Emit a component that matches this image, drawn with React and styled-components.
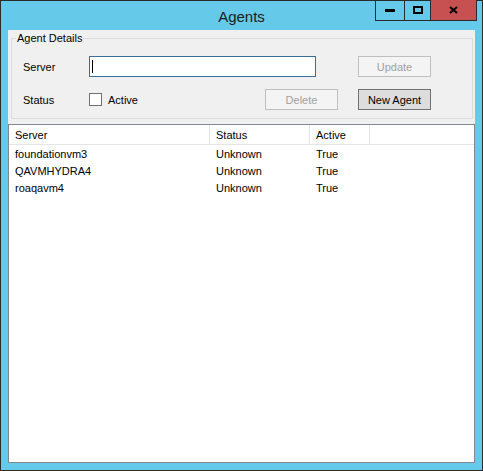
import React from 'react';
import styled, { createGlobalStyle } from 'styled-components';

const GlobalStyle = createGlobalStyle`
  html, body {
    margin: 0;
    padding: 0;
    background: #ffffff;
  }
  body {
    font-family: "Liberation Sans", Arial, sans-serif;
    font-size: 11px;
    color: #000;
  }
`;

const Window = styled.div`
  width: 483px;
  height: 471px;
  box-sizing: border-box;
  border: 1px solid #2b2b2b;
  background: #65c9ea;
  display: flex;
  flex-direction: column;
`;

const TitleBar = styled.div`
  height: 29px;
  display: grid;
  grid-template-columns: 1fr auto 1fr;
  align-items: start;
`;

const Title = styled.div`
  grid-column: 2;
  font-size: 15px;
  line-height: 15px;
  padding-top: 8px;
  color: #1b1b1b;
`;

const Controls = styled.div`
  grid-column: 3;
  justify-self: end;
  margin-right: 5px;
  margin-top: -1px;
  display: flex;
  border: 1px solid #2b2b2b;
  border-top: none;
  height: 21px;
  box-sizing: border-box;
`;

const CtrlButton = styled.div`
  width: ${p => p.$w}px;
  height: 100%;
  box-sizing: border-box;
  border-left: ${p => (p.$first ? 'none' : '1px solid #2b2b2b')};
  background: ${p => p.$bg || 'transparent'};
  display: flex;
  align-items: center;
  justify-content: center;
`;

const Client = styled.div`
  flex: 1;
  margin: 0 7px 7px 7px;
  display: flex;
  flex-direction: column;
  background: #f0f0f0;
`;

const TopPanel = styled.div`
  height: 94px;
  box-sizing: border-box;
  padding: 2px 2px 5px 3px;
`;

const GroupBox = styled.fieldset`
  margin: 0;
  height: 100%;
  box-sizing: border-box;
  border: 1px solid #dcdcdc;
  padding: 11px 0 0 11px;
  display: grid;
  grid-template-columns: 66px 176px 73px 20px 73px;
  grid-template-rows: 21px 21px;
  row-gap: 12px;
  align-items: center;
  align-content: start;
`;

const Legend = styled.legend`
  padding: 0 1px;
  margin-left: -7px;
  line-height: 13px;
`;

const Label = styled.div`
  grid-column: 1;
`;

const TextBox = styled.div`
  grid-column: 2 / span 2;
  width: 227px;
  height: 21px;
  box-sizing: border-box;
  border: 1px solid #3a6f9c;
  background: #fff;
  display: flex;
  align-items: center;
  padding-left: 2px;
`;

const Caret = styled.span`
  width: 1px;
  height: 13px;
  background: #000;
`;

const CheckField = styled.label`
  grid-column: 2;
  display: flex;
  align-items: center;
  gap: 6px;
`;

const CheckBox = styled.span`
  width: 13px;
  height: 13px;
  box-sizing: border-box;
  border: 1px solid #707070;
  background: #fff;
`;

const Button = styled.div`
  grid-column: ${p => p.$col};
  height: 21px;
  box-sizing: border-box;
  border: 1px solid ${p => (p.$disabled ? '#bfbfbf' : '#707070')};
  background: ${p => (p.$disabled ? '#f4f4f4' : '#dddddd')};
  color: ${p => (p.$disabled ? '#a0a0a0' : '#000')};
  display: flex;
  align-items: center;
  justify-content: center;
`;

const ListView = styled.div`
  flex: 1;
  border: 1px solid #828790;
  background: #fff;
  display: flex;
  flex-direction: column;
`;

const HeaderRow = styled.div`
  display: grid;
  grid-template-columns: 201px 100px 60px 1fr;
  height: 19px;
  border-bottom: 1px solid #e5e5e5;
`;

const HeaderCell = styled.div`
  border-right: ${p => (p.$last ? 'none' : '1px solid #e5e5e5')};
  padding-left: 6px;
  display: flex;
  align-items: center;
`;

const Row = styled.div`
  display: grid;
  grid-template-columns: 201px 100px 60px 1fr;
  height: 17px;
  align-items: center;
`;

const Cell = styled.div`
  padding-left: 6px;
`;

const agents = [
  { server: 'foundationvm3', status: 'Unknown', active: 'True' },
  { server: 'QAVMHYDRA4', status: 'Unknown', active: 'True' },
  { server: 'roaqavm4', status: 'Unknown', active: 'True' },
];

export default function App() {
  return (
    <>
      <GlobalStyle />
      <Window>
        <TitleBar>
          <Title>Agents</Title>
          <Controls>
            <CtrlButton $w={28} $first>
              <svg width="10" height="3"><rect width="10" height="3" fill="#000" /></svg>
            </CtrlButton>
            <CtrlButton $w={26}>
              <svg width="10" height="8"><rect x="1" y="1" width="8" height="6" fill="none" stroke="#000" strokeWidth="2" /></svg>
            </CtrlButton>
            <CtrlButton $w={46} $bg="#c75050">
              <svg width="9" height="8"><path d="M1 1 L8 7 M8 1 L1 7" stroke="#000" strokeWidth="2" /></svg>
            </CtrlButton>
          </Controls>
        </TitleBar>
        <Client>
          <TopPanel>
            <GroupBox>
              <Legend>Agent Details</Legend>
              <Label>Server</Label>
              <TextBox><Caret /></TextBox>
              <Button $col={5} $disabled>Update</Button>
              <Label>Status</Label>
              <CheckField><CheckBox />Active</CheckField>
              <Button $col={3} $disabled>Delete</Button>
              <Button $col={5}>New Agent</Button>
            </GroupBox>
          </TopPanel>
          <ListView>
            <HeaderRow>
              <HeaderCell>Server</HeaderCell>
              <HeaderCell>Status</HeaderCell>
              <HeaderCell>Active</HeaderCell>
              <HeaderCell $last />
            </HeaderRow>
            {agents.map(a => (
              <Row key={a.server}>
                <Cell>{a.server}</Cell>
                <Cell>{a.status}</Cell>
                <Cell>{a.active}</Cell>
              </Row>
            ))}
          </ListView>
        </Client>
      </Window>
    </>
  );
}
